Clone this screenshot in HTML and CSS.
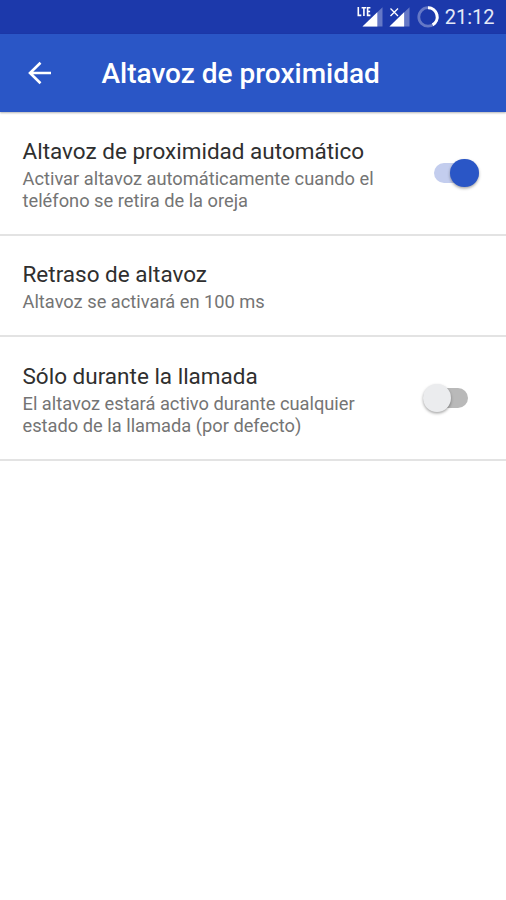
FILE: index.html
```html
<!DOCTYPE html>
<html lang="es">
<head>
<meta charset="utf-8">
<title>Altavoz de proximidad</title>
<link rel="stylesheet" href="styles.css">
</head>
<body>
<div class="status">
  <svg class="status-icons" width="86" height="34" viewBox="0 0 86 34">
    <path d="M25.500 7.300V26.500H5.500Z" fill="#fff" fill-opacity=".32"/>
    <path d="M20.300 12.300V26.500H5.500Z" fill="#fff"/>
    <path d="M1.300 7V15.400H4.300M4.600 7.800H9.200M6.900 7.800V16M13.400 7.800H10.600V15.400H13.400M10.600 11.500H13.100" fill="none" stroke="#fff" stroke-width="1.600"/>
    <path d="M52.500 7.300V26.500H32.500Z" fill="#fff" fill-opacity=".32"/>
    <path d="M47.100 12.300V26.500H32.500Z" fill="#fff"/>
    <path d="M33.500 8.500L41 16M41 8.500L33.500 16" stroke="#fff" stroke-width="1.300"/>
    <circle cx="71" cy="16.900" r="9.200" fill="none" stroke="#fff" stroke-opacity=".32" stroke-width="2.800"/>
    <path d="M71 7.700A9.200 9.200 0 0 1 75.600 24.870" fill="none" stroke="#fff" stroke-width="3"/>
  </svg>
  <span class="clock">21:12</span>
</div>
<header class="appbar">
  <svg class="back" width="24" height="24" viewBox="0 0 24 24"><path d="M23 12H2M12.500 1.700L2 12L12.500 22.300" fill="none" stroke="#fff" stroke-width="2.600"/></svg>
  <h1 class="heading">Altavoz de proximidad</h1>
</header>
<main>
  <section class="row">
    <div class="text">
      <h2 class="name">Altavoz de proximidad automático</h2>
      <p class="summary">Activar altavoz automáticamente cuando el<br>teléfono se retira de la oreja</p>
    </div>
    <div class="switch on"><div class="thumb"></div></div>
  </section>
  <section class="row short">
    <div class="text">
      <h2 class="name">Retraso de altavoz</h2>
      <p class="summary">Altavoz se activará en 100 ms</p>
    </div>
  </section>
  <section class="row">
    <div class="text">
      <h2 class="name">Sólo durante la llamada</h2>
      <p class="summary">El altavoz estará activo durante cualquier<br>estado de la llamada (por defecto)</p>
    </div>
    <div class="switch off"><div class="thumb"></div></div>
  </section>
</main>
</body>
</html>
```

FILE: styles.css
```css
* { box-sizing: border-box; }
body {
  margin: 0;
  height: 900px;
  overflow: hidden;
  background: #fff;
  font-family: Roboto, sans-serif;
}
h1, h2, p { margin: 0; font-weight: 400; }
.status {
  display: flex;
  justify-content: flex-end;
  height: 34px;
  padding-right: 11.500px;
  background: #1c39ab;
  color: #e4e9f8;
}
.status-icons { margin-right: 2px; }
.clock { font-size: 20px; line-height: 35px; white-space: nowrap; }
.appbar {
  display: flex;
  align-items: center;
  height: 78px;
  padding-left: 27.500px;
  background: #2a56c6;
  color: #fff;
  box-shadow: 0 1px 2px rgba(0, 0, 0, .3);
}
.heading {
  margin-left: 50px;
  padding-top: 2px;
  font-size: 28px;
  font-weight: 500;
  line-height: 34px;
  white-space: nowrap;
}
.row {
  display: flex;
  align-items: center;
  justify-content: space-between;
  height: 124px;
  padding: 0 27.300px 0 22.500px;
  border-bottom: 2px solid #e3e3e3;
}
.row.short { height: 101px; }
.row.short + .row { height: 124px; }
.text { padding-top: 2px; }
.name {
  color: #2f2f2f;
  font-size: 22.500px;
  line-height: 28px;
  white-space: nowrap;
}
.summary {
  margin-top: 3px;
  color: #747474;
  font-size: 18.270px;
  line-height: 21.500px;
  white-space: nowrap;
}
.switch {
  display: flex;
  align-items: center;
  width: 45px;
  height: 20px;
  border-radius: 10px;
}
.switch.on { justify-content: flex-end; background: #c3cdee; }
.switch.off { margin-right: 11px; background: #b9b9b9; }
.thumb {
  flex: none;
  width: 28.500px;
  height: 28.500px;
  border-radius: 50%;
  box-shadow: 0 1.500px 3px rgba(0, 0, 0, .35);
}
.on .thumb { background: #2a56c6; }
.off .thumb { background: #ebecee; }
```
